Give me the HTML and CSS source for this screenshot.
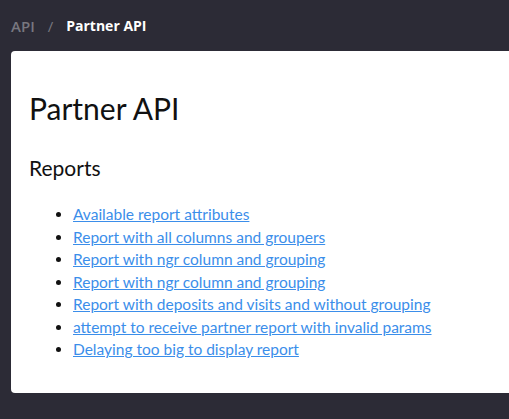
FILE: index.html
```html
<!DOCTYPE html>
<html lang="en">
<head>
    <meta charset="UTF-8">
    <meta name="viewport" content="width=device-width, initial-scale=1.0">
    <title>Partner API</title>
    <link rel="stylesheet" href="styles.css">
</head>
<body>
    <!-- Breadcrumbs -->
    <div class="breadcrumbs">
        <a href="#" class="crumb">API</a>
        <span class="sep">/</span>
        <span class="current">Partner API</span>
    </div>

    <!-- Main content -->
    <div class="card">
        <h1>Partner API</h1>
        <h2>Reports</h2>
        <ul class="links">
            <li><a href="#">Available report attributes</a></li>
            <li><a href="#">Report with all columns and groupers</a></li>
            <li><a href="#">Report with ngr column and grouping</a></li>
            <li><a href="#">Report with ngr column and grouping</a></li>
            <li><a href="#">Report with deposits and visits and without grouping</a></li>
            <li><a href="#">attempt to receive partner report with invalid params</a></li>
            <li><a href="#">Delaying too big to display report</a></li>
        </ul>
    </div>
</body>
</html>
```

FILE: styles.css
```css
body {
    margin: 0;
    padding: 0;
    background-color: #2c2b36;
    font-family: Lato, "Open Sans", sans-serif;
    overflow: hidden;
}

.breadcrumbs {
    display: flex;
    align-items: center;
    gap: 13px;
    padding: 12px 11px 0;
    height: 39px;
    box-sizing: border-box;
    font-family: "Open Sans", sans-serif;
    font-size: 14px;
}
.breadcrumbs .crumb {
    color: #78777f;
    text-decoration: none;
    font-size: 15px;
    font-weight: 600;
}
.breadcrumbs .sep {
    color: #78777f;
    font-size: 15px;
}
.breadcrumbs .current {
    color: #ffffff;
    font-weight: 700;
}

.card {
    background-color: #ffffff;
    margin: 12px 0 0 11px;
    border-radius: 4px 0 0 4px;
    padding: 39px 18px 28px;
    height: 342px;
    box-sizing: border-box;
}
h1 {
    margin: 0;
    font-size: 30px;
    font-weight: 400;
    color: #111;
}
h2 {
    margin: 29px 0 0;
    font-size: 21px;
    font-weight: 400;
    color: #111;
}
.links {
    margin: 23px 0 0;
    padding-left: 44px;
    font-size: 15.5px;
    line-height: 22.5px;
}
.links li::marker {
    color: #111;
}
.links a {
    color: #3b8eea;
}
```
